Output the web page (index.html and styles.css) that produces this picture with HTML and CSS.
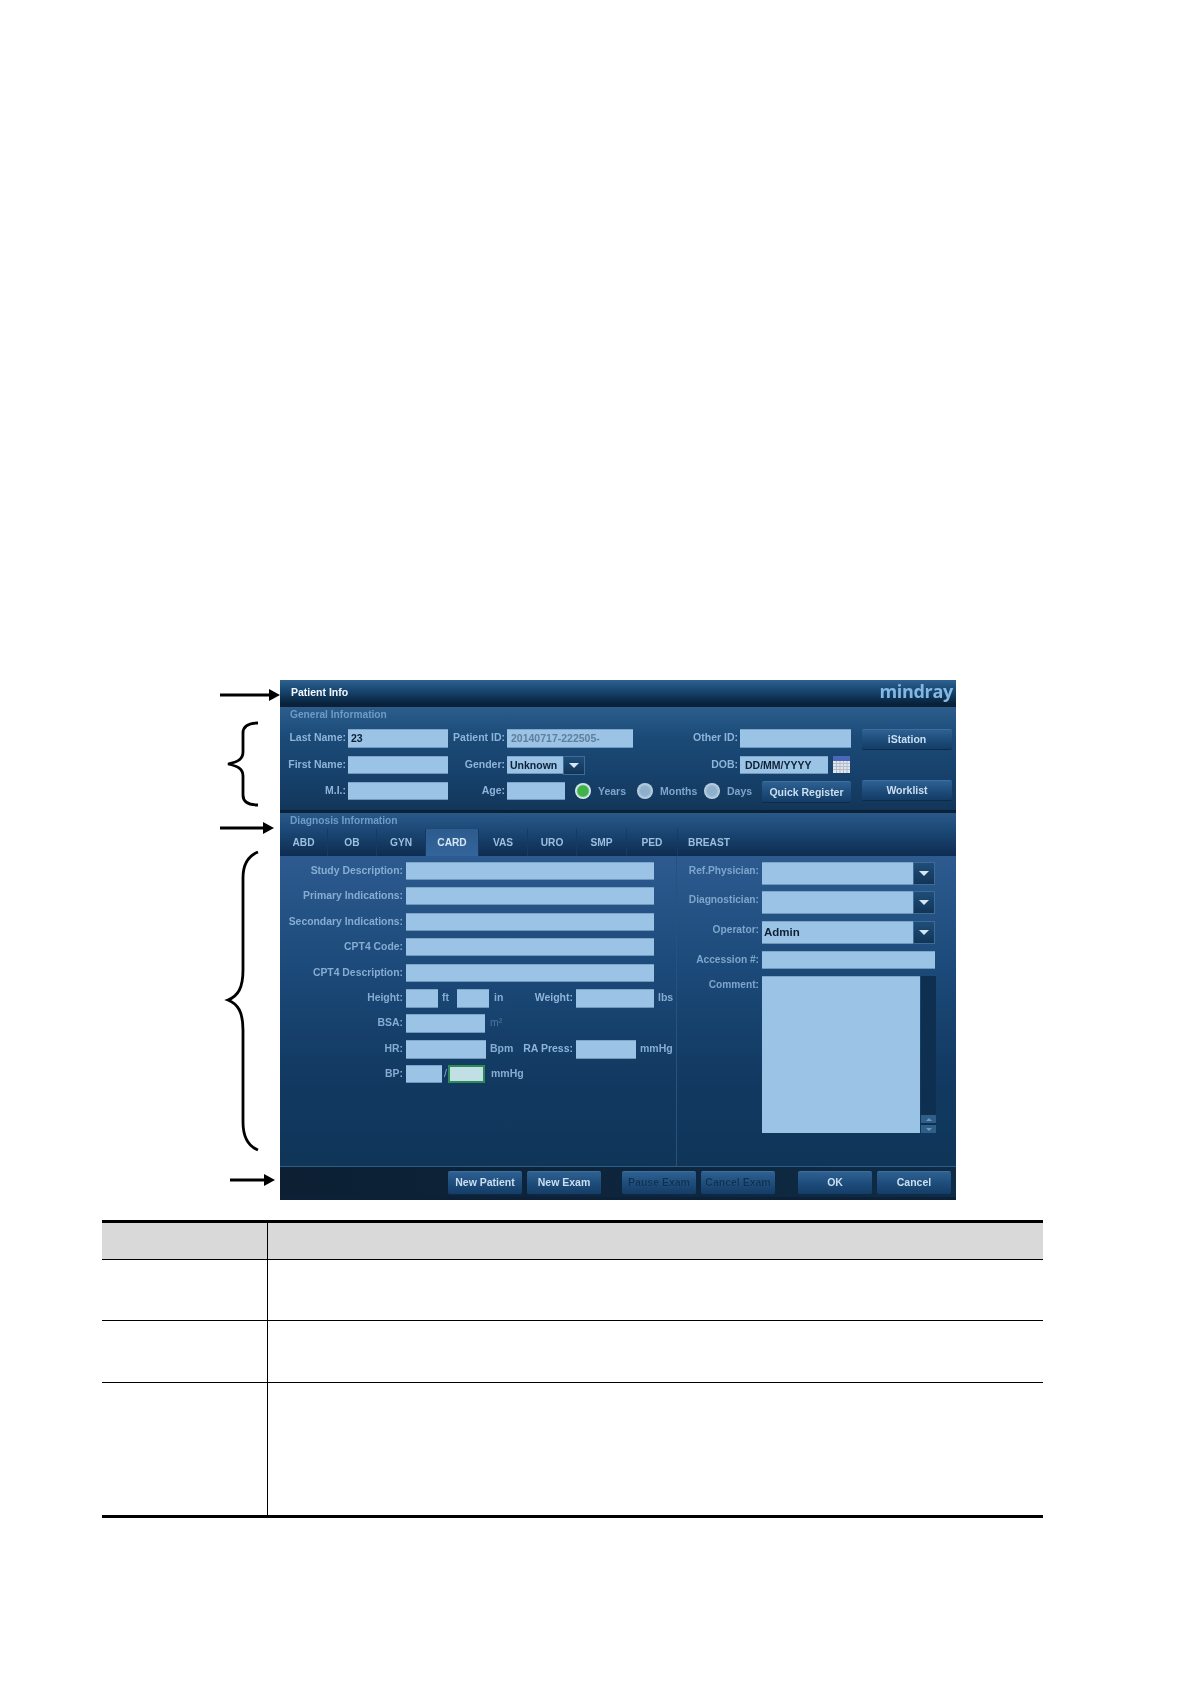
FILE: index.html
```html
<!DOCTYPE html>
<html lang="en">
<head>
    <meta charset="UTF-8">
    <title>Patient Info</title>
    <link rel="stylesheet" href="styles.css">
</head>
<body>

    <div class="figure">
        <svg class="callouts" width="70" height="520" viewBox="210 680 70 520" fill="none" stroke="#000">
            <path d="M220 695H272" stroke-width="2.8"/>
            <path d="M280 695l-11-6v12z" fill="#000" stroke="none"/>
            <path d="M220 828H265" stroke-width="2.8"/>
            <path d="M274 828l-11-6v12z" fill="#000" stroke="none"/>
            <path d="M230 1180H266" stroke-width="2.8"/>
            <path d="M275 1180l-11-6v12z" fill="#000" stroke="none"/>
            <path d="M258 723C249 723 243 726 243 733V752C243 759 238 762 228 764C238 766 243 769 243 776V795C243 802 249 805 258 805" stroke-width="2.8"/>
            <path d="M258 852C248 856 243 864 243 878V970C243 988 238 996 228 1000C238 1004 243 1012 243 1030V1122C243 1136 248 1146 258 1150" stroke-width="2.8"/>
        </svg>

        <div class="panel">
            <div class="title-bar">
                <span class="title">Patient Info</span>
                <span class="logo">mindray</span>
            </div>

            <div class="general">
                <div class="section-title">General Information</div>

                <div class="gen-row first">
                    <label class="lbl w66">Last Name:</label>
                    <div class="field w100 h19 val">23</div>
                    <label class="lbl w57">Patient ID:</label>
                    <div class="field w126 h19 val muted">20140717-222505-</div>
                    <label class="lbl w105">Other ID:</label>
                    <div class="field w111 h19"></div>
                    <div class="btn side-btn">iStation</div>
                </div>

                <div class="gen-row second">
                    <label class="lbl w66">First Name:</label>
                    <div class="field w100 h18"></div>
                    <label class="lbl w57">Gender:</label>
                    <div class="field w56 h18 val">Unknown</div>
                    <div class="drop small"><i></i></div>
                    <label class="lbl w153">DOB:</label>
                    <div class="field w88 h18 val dob">DD/MM/YYYY</div>
                    <svg class="calendar" width="17" height="17" viewBox="0 0 17 17">
                        <rect width="17" height="17" fill="#dfe6ee"/>
                        <rect width="17" height="5" fill="#4a68b8"/>
                        <path d="M0 7.500H17M0 10.500H17M0 13.500H17M3.500 5V17M7 5V17M10.500 5V17M14 5V17" stroke="#b4bdc8" stroke-width="1"/>
                    </svg>
                </div>

                <div class="gen-row third">
                    <label class="lbl w66 down">M.I.:</label>
                    <div class="field w100 h18 down"></div>
                    <label class="lbl w57 down">Age:</label>
                    <div class="field w58 h18 down"></div>
                    <div class="radios">
                        <span class="radio on"></span><span class="radio-txt t-years">Years</span>
                        <span class="radio"></span><span class="radio-txt t-months">Months</span>
                        <span class="radio"></span><span class="radio-txt">Days</span>
                    </div>
                    <div class="btn quick">Quick Register</div>
                    <div class="btn side-btn">Worklist</div>
                </div>
            </div>

            <div class="diagnosis">
                <div class="section-title">Diagnosis Information</div>
                <div class="tabs">
                    <span class="tab t48">ABD</span>
                    <span class="tab t49">OB</span>
                    <span class="tab t49">GYN</span>
                    <span class="tab t53 active">CARD</span>
                    <span class="tab t49">VAS</span>
                    <span class="tab t49">URO</span>
                    <span class="tab t50">SMP</span>
                    <span class="tab t51">PED</span>
                    <span class="tab t62">BREAST</span>
                </div>
            </div>

            <div class="main">
                <div class="main-left">
                    <div class="row"><label class="lbl mlabel">Study Description:</label><div class="field w248 h18"></div></div>
                    <div class="row"><label class="lbl mlabel">Primary Indications:</label><div class="field w248 h18"></div></div>
                    <div class="row"><label class="lbl mlabel">Secondary Indications:</label><div class="field w248 h18"></div></div>
                    <div class="row"><label class="lbl mlabel">CPT4 Code:</label><div class="field w248 h18"></div></div>
                    <div class="row"><label class="lbl mlabel">CPT4 Description:</label><div class="field w248 h18"></div></div>
                    <div class="row">
                        <label class="lbl mlabel">Height:</label>
                        <div class="field w32 h19"></div><span class="unit u-ft">ft</span>
                        <div class="field w32 h19"></div><span class="unit u-in">in</span>
                        <label class="lbl w65">Weight:</label>
                        <div class="field w78 h19"></div><span class="unit">lbs</span>
                    </div>
                    <div class="row">
                        <label class="lbl mlabel">BSA:</label>
                        <div class="field w79 h19"></div><span class="unit dim">m²</span>
                    </div>
                    <div class="row">
                        <label class="lbl mlabel">HR:</label>
                        <div class="field w80 h19"></div><span class="unit u-bpm">Bpm</span>
                        <label class="lbl w61">RA Press:</label>
                        <div class="field w60 h19"></div><span class="unit">mmHg</span>
                    </div>
                    <div class="row">
                        <label class="lbl mlabel">BP:</label>
                        <div class="field w36 h18"></div><span class="unit u-slash">/</span>
                        <div class="field w37 h18 focused"></div><span class="unit u-mm">mmHg</span>
                    </div>
                </div>

                <div class="main-right">
                    <div class="rrow"><label class="lbl rlabel">Ref.Physician:</label><div class="field w151 h23"></div><div class="drop"><i></i></div></div>
                    <div class="rrow"><label class="lbl rlabel">Diagnostician:</label><div class="field w151 h23"></div><div class="drop"><i></i></div></div>
                    <div class="rrow"><label class="lbl rlabel">Operator:</label><div class="field w151 h23 val op">Admin</div><div class="drop"><i></i></div></div>
                    <div class="rrow acc"><label class="lbl rlabel">Accession #:</label><div class="field w173 h18"></div></div>
                    <div class="rrow comment">
                        <label class="lbl rlabel">Comment:</label>
                        <div class="field comment-box"></div>
                        <div class="scroll">
                            <span class="scroll-btn"><i class="up"></i></span>
                            <span class="scroll-btn"><i></i></span>
                        </div>
                    </div>
                </div>
            </div>

            <div class="footer">
                <div class="btn foot">New Patient</div>
                <div class="btn foot">New Exam</div>
                <div class="btn foot off gap-l">Pause Exam</div>
                <div class="btn foot off">Cancel Exam</div>
                <div class="btn foot gap-r">OK</div>
                <div class="btn foot">Cancel</div>
            </div>
        </div>
    </div>

    <table class="doc-table">
        <tr class="head"><th class="c1"></th><th></th></tr>
        <tr class="r1"><td></td><td></td></tr>
        <tr class="r2"><td></td><td></td></tr>
        <tr class="r3"><td></td><td></td></tr>
    </table>

</body>
</html>
```

FILE: styles.css
```css
body {
    margin: 0;
    background-color: #fff;
    font-family: 'Liberation Sans', Arial, sans-serif;
}

.figure {
    display: flex;
    padding: 680px 0 0 210px;
}

.callouts {
    flex: none;
}

.panel {
    width: 676px;
    height: 520px;
    background-color: #0c2038;
    font-size: 10.500px;
    font-weight: 700;
    color: #8fb4d9;
    filter: blur(0.3px);
}

/* title */
.title-bar {
    height: 24px;
    display: flex;
    justify-content: space-between;
    background: linear-gradient(#2d6290, #174670 45%, #0a2844 90%, #08213a);
}

.title {
    padding: 5px 0 0 11px;
    color: #f2f7fb;
    line-height: 14px;
}

.logo {
    padding-right: 3px;
    font-family: 'Open Sans', sans-serif;
    font-size: 18px;
    font-weight: 700;
    line-height: 23px;
    letter-spacing: -0.3px;
    color: #84b8e2;
}

/* general */
.general {
    margin-top: 3px;
    height: 103px;
    background: linear-gradient(#2b5d8c, #1b4a77 30%, #16406a 70%, #123659);
}

.section-title {
    padding-left: 10px;
    line-height: 15px;
    color: #6d9cc6;
    font-size: 10.200px;
}

.general .section-title {
    height: 22px;
}

.gen-row {
    display: flex;
    align-items: flex-start;
}

.gen-row.first {
    height: 27px;
}

.gen-row.second {
    height: 24px;
}

.gen-row.third {
    height: 23px;
}

.down {
    margin-top: 2px;
}

/* labels and inputs */
.lbl {
    flex: none;
    text-align: right;
    line-height: 17px;
    padding-right: 2px;
    box-sizing: border-box;
    white-space: nowrap;
}

.w57 { width: 59px; }
.w61 { width: 64px; padding-right: 3px; }
.w65 { width: 68px; padding-right: 3px; }
.w66 { width: 68px; }
.w105 { width: 107px; }
.w153 { width: 155px; }

.field {
    flex: none;
    box-sizing: border-box;
    background-color: #9ac3e6;
    border-top: 1px solid #7ea6c8;
    border-bottom: 1px solid #6f97b9;
    color: #0d2036;
    line-height: 16px;
}

.val {
    padding-left: 3px;
}

.muted {
    color: #5f7f9c;
    padding-left: 4px;
}

.dob {
    padding-left: 5px;
}

.op {
    padding-left: 2px;
    line-height: 20px;
    font-size: 11.500px;
}

.h18 { height: 18px; }
.h19 { height: 19px; }
.h23 { height: 23px; }

.w32 { width: 32px; }
.w36 { width: 36px; }
.w37 { width: 37px; }
.w56 { width: 56px; }
.w58 { width: 58px; }
.w60 { width: 60px; }
.w78 { width: 78px; }
.w79 { width: 79px; }
.w80 { width: 80px; }
.w88 { width: 88px; }
.w100 { width: 100px; }
.w111 { width: 111px; }
.w126 { width: 126px; }
.w151 { width: 151px; }
.w173 { width: 173px; }
.w248 { width: 248px; }

.drop {
    flex: none;
    box-sizing: border-box;
    width: 22px;
    height: 23px;
    display: flex;
    align-items: center;
    justify-content: center;
    border: 1px solid #3d6c95;
    background: linear-gradient(#1f4d78, #123557);
}

.drop.small {
    height: 19px;
}

.drop i {
    border-left: 5px solid transparent;
    border-right: 5px solid transparent;
    border-top: 5px solid #d6e6f3;
}

.calendar {
    flex: none;
    margin-left: 5px;
}

.radios {
    display: flex;
    flex: none;
    align-items: center;
    width: 186px;
    height: 22px;
}

.radio {
    flex: none;
    width: 16px;
    height: 16px;
    margin-left: 10px;
    border-radius: 50%;
    background: radial-gradient(circle, #8fb0cc 0 40%, #c9dcea 75%);
}

.radio.on {
    background: radial-gradient(circle, #3fb24a 0 45%, #d8e8ee 60%);
}

.radio-txt {
    flex: none;
    color: #7ea6cc;
    margin-left: 7px;
}

.radio-txt.t-years {
    width: 29px;
}

.radio-txt.t-months {
    width: 34px;
}

/* buttons */
.btn {
    flex: none;
    box-sizing: border-box;
    text-align: center;
    color: #cbdff0;
    background: linear-gradient(#2d6192, #1d4b7a 55%, #143d66);
    border-top: 1px solid #3c6f9c;
    border-bottom: 1px solid #0d2a47;
    border-radius: 2px;
}

.side-btn {
    width: 90px;
    height: 21px;
    margin-left: 11px;
    line-height: 18px;
}

.quick {
    width: 89px;
    height: 22px;
    margin-left: 11px;
    margin-top: 1px;
    line-height: 20px;
}

/* diagnosis tabs */
.diagnosis {
    margin-top: 3px;
    height: 43px;
    background: linear-gradient(#29598a, #1a4673 45%, #0e2c50);
}

.diagnosis .section-title {
    height: 16px;
}

.tabs {
    display: flex;
    height: 27px;
}

.tab {
    line-height: 27px;
    text-align: center;
    font-size: 10.200px;
    color: #9dbfdf;
    border-right: 1px solid #153b62;
    box-sizing: border-box;
}

.tab:last-child {
    border-right: 0;
}

.tab.active {
    background: linear-gradient(#2d5b8e, #33649a);
    color: #d5e6f5;
}

.t48 { width: 48px; }
.t49 { width: 49px; }
.t50 { width: 50px; }
.t51 { width: 51px; }
.t53 { width: 53px; }
.t62 { width: 62px; }

/* main form */
.main {
    height: 311px;
    display: flex;
    background: linear-gradient(#2d5b90, #1c4a7a 35%, #123a62 70%, #0f3558);
    border-bottom: 1px solid #2f5d85;
    box-sizing: border-box;
}

.main-left {
    width: 397px;
    box-sizing: border-box;
    padding-top: 6px;
    display: grid;
    grid-auto-rows: 25.400px;
    align-content: start;
    border-right: 1px solid #26527c;
}

.row {
    display: flex;
    align-items: flex-start;
}

.mlabel {
    width: 126px;
    padding-right: 3px;
    font-size: 10.400px;
    color: #86acd2;
}

.unit {
    flex: none;
    padding-left: 4px;
    line-height: 17px;
    color: #86acd2;
    box-sizing: border-box;
}

.u-ft { width: 19px; }
.u-in { width: 19px; padding-left: 5px; }
.u-bpm { width: 26px; }
.u-slash { width: 6px; padding-left: 2px; font-weight: 400; }
.u-mm { padding-left: 6px; }

.dim {
    color: #4d779f;
    font-weight: 400;
    padding-left: 5px;
}

.focused {
    background-color: #c2dfe6;
    border: 2px solid #2d8a55;
}

.main-right {
    flex: 1;
    padding-top: 6px;
}

.rrow {
    display: flex;
    align-items: flex-start;
    height: 30px;
}

.rrow:first-child {
    height: 29px;
}

.rrow.acc {
    height: 25px;
}

.rlabel {
    width: 85px;
    padding-right: 3px;
    font-size: 10.200px;
    color: #7ea6cc;
}

.comment-box {
    width: 158px;
    height: 157px;
    border-bottom: 0;
}

.scroll {
    width: 15px;
    height: 157px;
    margin-left: 1px;
    background-color: #0e2f50;
    display: flex;
    flex-direction: column;
    justify-content: flex-end;
    gap: 2px;
}

.scroll-btn {
    height: 8px;
    display: flex;
    align-items: center;
    justify-content: center;
    background-color: #2f5f88;
}

.scroll-btn i {
    border-left: 3px solid transparent;
    border-right: 3px solid transparent;
    border-top: 3px solid #6d97bb;
}

.scroll-btn i.up {
    border-top: 0;
    border-bottom: 3px solid #6d97bb;
}

/* footer */
.footer {
    height: 30px;
    display: flex;
    padding: 4px 0 0 168px;
    gap: 5px;
    box-sizing: border-box;
    background: linear-gradient(90deg, #0c1f33, #0f2b45);
}

.foot {
    width: 74px;
    height: 24px;
    line-height: 21px;
}

.foot.off {
    color: #0f2f52;
    text-shadow: 0 0 1px #3b6a94;
}

.gap-l {
    margin-left: 16px;
}

.gap-r {
    margin-left: 18px;
}

/* table under the figure */
.doc-table {
    margin: 20px 0 0 102px;
    width: 941px;
    border-collapse: collapse;
    table-layout: fixed;
    border-top: 3px solid #000;
    border-bottom: 3px solid #000;
}

.doc-table .c1 {
    width: 165px;
}

.doc-table th,
.doc-table td {
    padding: 0;
    border-bottom: 1px solid #000;
}

.doc-table th:first-child,
.doc-table td:first-child {
    border-right: 1px solid #000;
}

.head {
    height: 38px;
    background-color: #d9d9d9;
}

.r1 {
    height: 61px;
}

.r2 {
    height: 62px;
}

.r3 {
    height: 134px;
}
```
